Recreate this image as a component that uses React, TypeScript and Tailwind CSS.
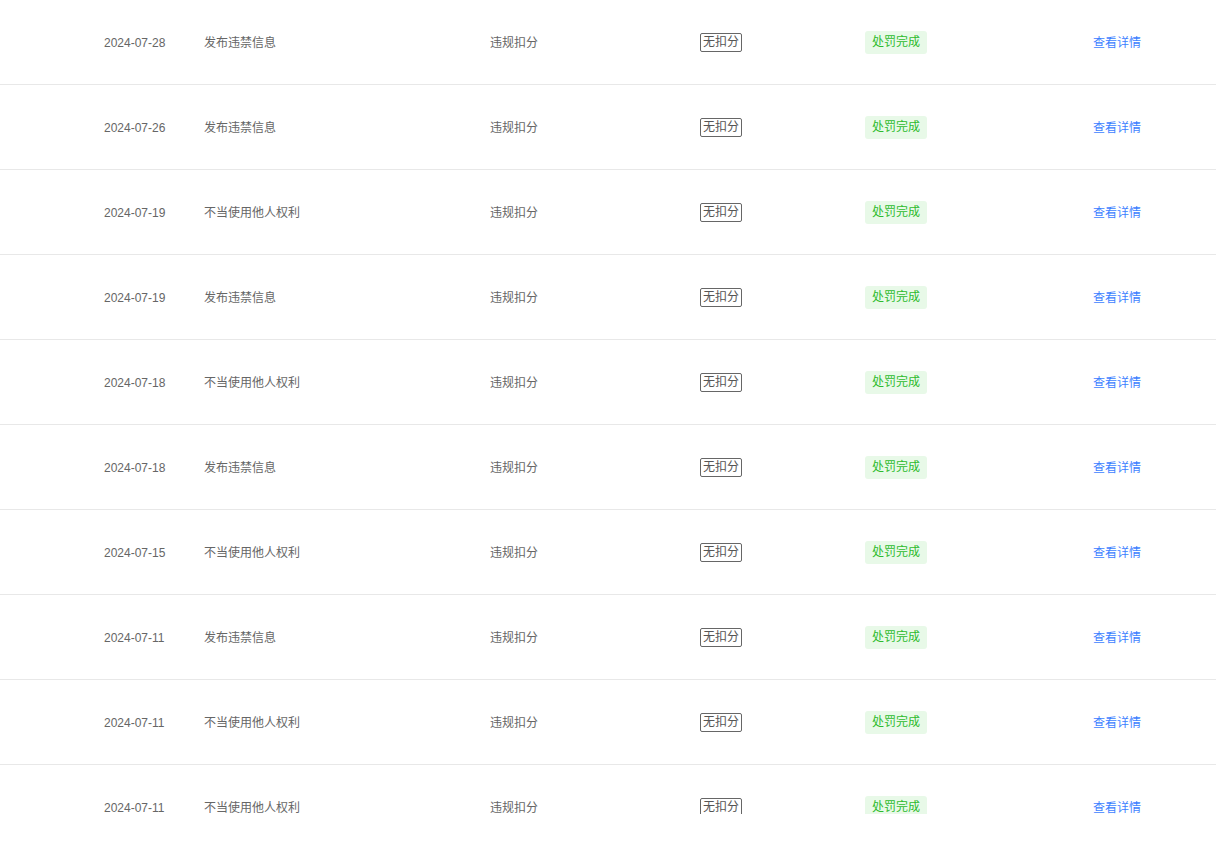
import React from "react";

type Row = { date: string; reason: string };

const rows: Row[] = [
  { date: "2024-07-28", reason: "发布违禁信息" },
  { date: "2024-07-26", reason: "发布违禁信息" },
  { date: "2024-07-19", reason: "不当使用他人权利" },
  { date: "2024-07-19", reason: "发布违禁信息" },
  { date: "2024-07-18", reason: "不当使用他人权利" },
  { date: "2024-07-18", reason: "发布违禁信息" },
  { date: "2024-07-15", reason: "不当使用他人权利" },
  { date: "2024-07-11", reason: "发布违禁信息" },
  { date: "2024-07-11", reason: "不当使用他人权利" },
  { date: "2024-07-11", reason: "不当使用他人权利" },
];

export default function App() {
  return (
    <div
      className="h-[855px] w-full bg-white"
      style={{ fontFamily: '"Liberation Sans", "Noto Sans CJK SC", sans-serif' }}
    >
      <div className="h-[814px] overflow-hidden">
        {rows.map((r, i) => (
          <div
            key={i}
            className="flex h-[85px] items-center border-b border-[#e8e8e8] pt-[1px] text-[12px] leading-[18px] text-[#666]"
          >
            <div className="w-[204px] shrink-0 pl-[104px]">{r.date}</div>
            <div className="w-[286px] shrink-0">{r.reason}</div>
            <div className="w-[210px] shrink-0">违规扣分</div>
            <div className="w-[165px] shrink-0">
              <span className="inline-block rounded-[2px] border border-[#666] px-[2px] leading-[17px] text-[#555]">
                无扣分
              </span>
            </div>
            <div className="w-[228px] shrink-0">
              <span className="inline-block rounded-[3px] bg-[#e8f9e8] px-[7px] py-[3px] leading-[17px] text-[#2dbb2d]">
                处罚完成
              </span>
            </div>
            <div className="text-[#3d7fff]">查看详情</div>
          </div>
        ))}
      </div>
    </div>
  );
}
